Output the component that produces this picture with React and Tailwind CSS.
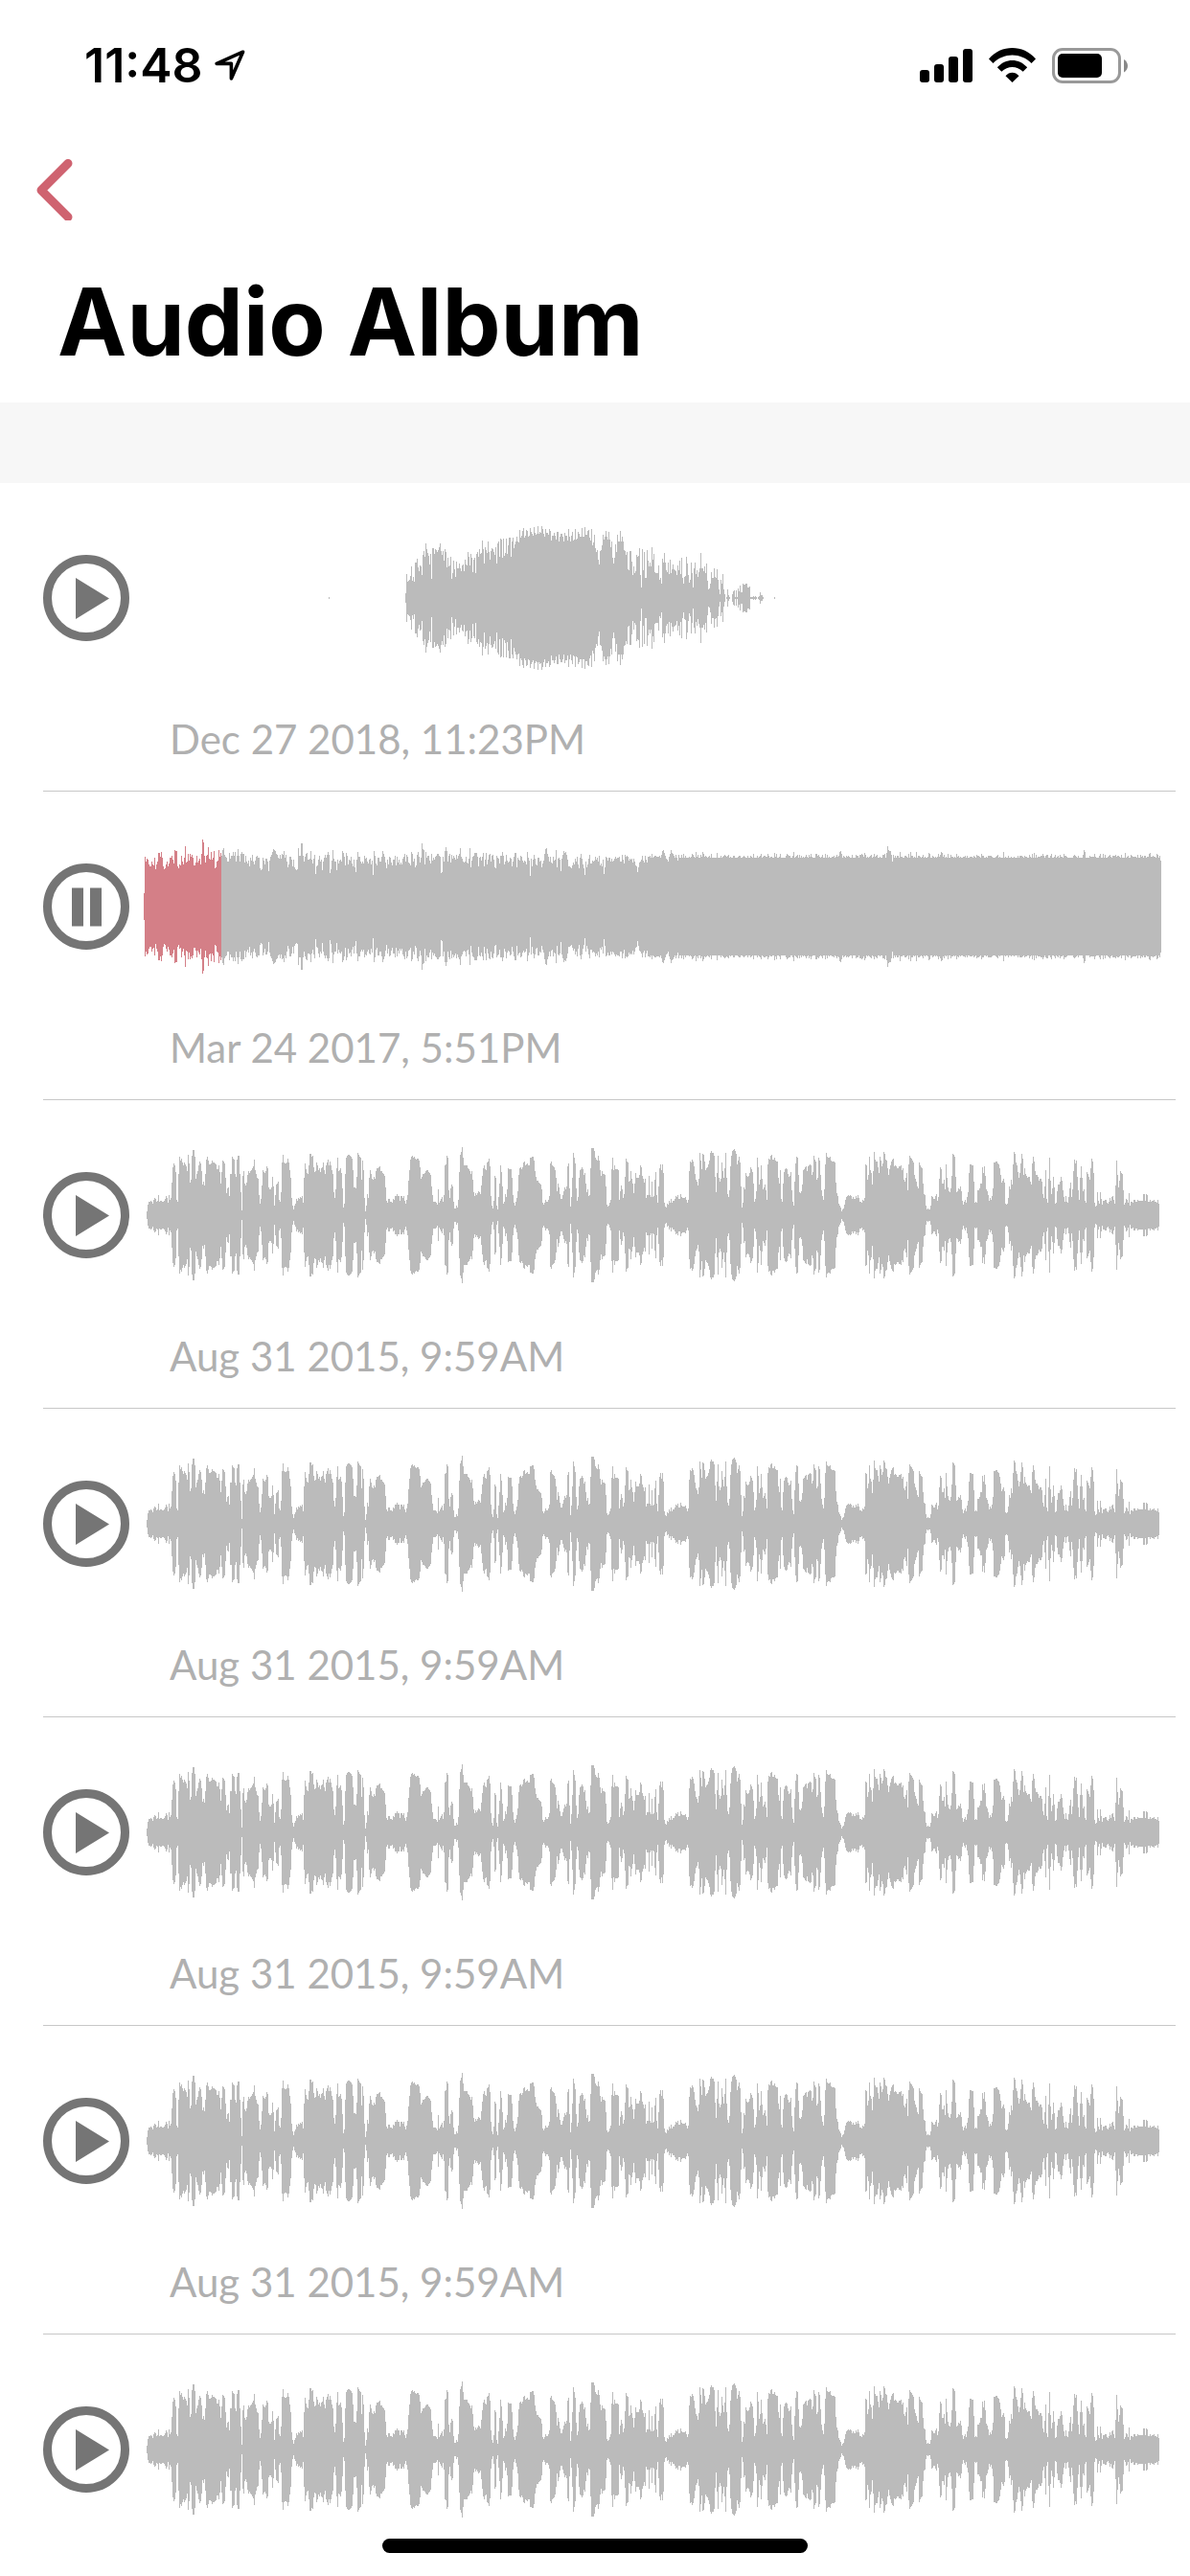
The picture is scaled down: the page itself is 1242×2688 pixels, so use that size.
import React, { useState } from 'react';

const WAVE_WIDTH = 3186;
const WAVE_HEIGHT = 510;
const MIDLINE = WAVE_HEIGHT / 2;
const STEP = 3;

// Each chunk is a list of "x:crest" steps; `at` shifts x, `zero` is the crest value of silence.
const VOICE_MEMO = [
  { at: 0, zero: 312, steps: '579:309 582:312' },
  {
    at: 690,
    zero: 312,
    steps:
      '129:297 132:237 135:261 138:258 141:255 144:243 147:213 150:258 153:246 156:261 159:201 165:189 168:216 171:228 174:210 177:213 180:240 183:177 186:165 189:183 192:141 195:159 198:171 201:180 204:207 207:174 210:252 213:156 219:174 222:159 225:162 228:168 231:162 234:153 237:141 240:165 243:177 246:165 249:195 252:159 255:168 258:216 261:186 264:213 267:210 270:183 273:252 276:234 279:195 282:222 285:246 288:198 291:219 297:204 300:219 303:228 306:210 309:207 312:228 315:192 318:207 321:210 324:168 327:183 330:210 333:174 336:186 339:231 342:192 345:186 348:234 351:174 354:168 357:183 360:159 363:174 366:171 369:132 372:159 375:204 378:153 381:162 384:171 387:135 390:168 393:192 396:165 399:156 402:159 405:168 408:177 411:153 414:204 417:141 420:135 423:183 426:126 429:129 432:186 435:126 438:180 441:171 444:126 447:174 450:147 453:123 459:183 462:135 465:123 468:156 471:144 474:135 477:120 480:135 483:138 486:99 489:123 492:117 495:102 498:93 501:123 504:117 507:99 510:102 513:120 516:117 519:93 522:105 525:111 528:117 531:90 534:108 537:114 540:111 543:87 546:111 549:105 552:108 555:87 558:96 561:111 564:120 567:96 570:108 576:114 579:96 582:102 585:132 588:117 594:108 597:117 600:129 603:105 609:135 612:120 615:111 621:120 624:135 627:108 630:117 636:132 639:96 642:120 645:135 648:117 651:105 654:132 657:129 660:96 663:129 666:126 669:105 672:111 675:120 681:93 684:120 690:90 693:114 699:102 702:99 705:123 708:132 711:96 714:147 717:138 720:114 723:156 726:168 729:162 732:192 735:207 738:165 741:162 744:147 747:114 750:129 753:120 756:102 759:120 762:129 765:105 768:129 771:153 774:135 777:186 780:204 783:186 786:144 789:168 792:114 795:135 801:102 804:135 807:120 810:135 813:162 816:165 819:177 822:168 825:222 828:225 831:165 837:198 840:240 843:213 846:234 849:228 852:177 855:183 858:180 861:156 864:240 867:279 870:159 873:225 876:168 879:249 885:162 888:195 891:213 894:201 897:213 900:153 903:192 906:174 909:231 912:234 921:210 924:255 927:249 930:267 933:189 936:201 939:171 942:201 945:225 948:231 951:201 954:237 957:192 960:234 963:222 966:207 969:222 972:225 975:228 978:240 981:210 984:225 987:195 990:237 993:186 996:249 999:267 1002:246 1005:243 1008:183 1011:204 1014:240 1017:264 1020:255 1023:201 1026:234 1029:279 1032:219 1035:201 1038:237 1041:225 1044:246 1047:231 1050:219 1053:171 1056:219 1062:228 1065:213 1068:234 1071:204 1074:258 1077:285 1080:282 1083:267 1086:231 1089:249 1095:219 1098:246 1101:249 1104:222 1107:255 1110:285 1113:300 1116:255 1119:267 1122:237 1125:285 1128:300 1131:312 1134:309 1137:285 1140:303 1143:309 1146:312 1152:300 1155:291 1158:288 1161:309 1164:288 1167:309 1170:282 1173:291 1176:273 1179:294 1185:267 1188:270 1194:267 1200:279 1206:276 1209:309 1218:306 1221:309 1224:306 1227:309 1230:312 1233:309 1236:306 1239:294 1242:303 1248:309 1251:312 1284:309 1287:312',
  },
];

const SPEECH = [
  {
    at: -30,
    zero: 264,
    steps:
      '39:252 42:231 45:222 51:219 54:222 57:228 60:216 63:210 66:213 69:222 72:219 75:201 78:222 81:219 87:222 93:219 96:213 99:204 102:210 105:225 108:201 111:216 114:210 117:162 120:114 123:102 126:108 129:129 132:216 135:222 138:135 141:81 144:93 147:87 150:99 153:108 156:99 159:105 162:111 165:126 168:75 171:102 174:162 177:153 180:78 183:60 189:81 192:150 195:135 198:126 201:108 204:96 207:102 210:126 213:168 216:159 219:171 222:135 225:90 228:81 231:93 234:105 240:102 243:93 246:99 252:102 255:105 258:120 264:108 267:129 270:165 273:129 276:93 279:96 282:102 285:147 288:195 291:180 294:177 297:204 300:135 306:81 309:87 312:90 315:135 318:144 321:90 324:78 330:135 333:192 336:249 339:141 342:126 345:165 348:171 351:162 354:138 357:126 360:132 363:126 366:123 369:117 372:111 375:90 378:123 381:135 384:147 387:150 390:201 393:228 396:213 399:171 402:123 405:129 408:132 411:126 414:111 417:117 420:177 423:183 429:177 432:144 435:174 438:234 441:201 444:168 447:165 450:159 453:216 456:222 459:192 462:99 465:75 468:99 471:102 477:99 480:87 483:99 486:123 489:147 492:210 495:234 498:246 501:234 504:228 507:213 510:219 513:210 516:213 519:207 522:210 525:204 528:225 531:147 534:102 537:120 540:132 543:135 546:108 549:72 555:81 558:78 561:114 564:129 567:126 570:99 573:108 576:123 579:117 582:129 585:117 588:114 591:99 594:123 597:135 600:108 603:99 606:90 609:108 612:96 615:108 618:123 621:135 624:192 627:210 630:183 633:117 636:84 639:126 642:123 645:117 648:132 651:180 654:240 657:228 660:135 663:84 666:78 669:75 675:78 678:81 681:87 684:123 687:177 693:180 696:144 699:69 702:75 705:81 708:84 711:153 714:93 717:123 720:210 723:252 726:234 729:198 732:210 735:147 738:123 741:135 744:150 747:153 750:144 753:150 756:126 759:117 765:114 768:111 771:126 777:132 780:135 783:141 786:177 789:219 792:225 795:213 801:222 807:225',
  },
  {
    at: 780,
    zero: 264,
    steps:
      '0:213 3:216 6:204 12:198 15:204 21:219 24:204 30:210 33:204 36:219 39:228 42:216 45:201 48:156 51:123 54:90 57:81 60:78 63:84 66:81 69:87 72:90 75:87 81:93 84:114 87:150 90:144 93:135 99:132 102:126 105:123 111:129 114:132 117:138 120:174 123:201 126:222 135:225 138:231 141:183 144:225 147:219 150:213 153:207 156:222 159:201 162:108 165:105 168:78 171:84 174:186 177:210 180:180 183:168 186:174 189:222 192:243 198:234 201:240 204:216 207:129 210:75 213:66 216:51 219:84 222:108 234:117 237:120 240:126 243:135 246:126 249:153 252:192 255:204 258:195 261:201 264:195 267:189 270:192 273:198 276:171 279:141 282:117 285:108 288:120 291:123 294:99 297:96 300:87 303:111 306:204 309:234 312:243 315:219 318:141 321:147 324:234 327:246 330:207 333:165 336:108 339:129 342:174 345:228 348:222 351:198 354:207 357:183 360:117 363:120 372:147 375:201 378:225 381:234 384:222 387:210 390:189 393:138 396:117 399:114 402:120 405:114 408:99 411:96 414:108 417:105 420:102 423:108 429:84 435:81 441:93 444:126 447:144 450:156 456:162 459:165 462:168 465:183 468:225 471:231 474:225 477:216 480:222 486:216 489:204 492:102 495:96 498:108 501:111 504:114 507:123 510:147 513:189 516:165 519:177 522:198 525:213 531:201 534:189 537:177 540:183 543:174 546:111 549:102 552:180 555:237 558:207 561:147 564:69 567:84 570:102 573:180 576:219 579:207 582:147 585:123 588:120 591:114 594:120 597:138 600:132 603:165 606:192 609:183 612:204 615:201 618:117 621:54 630:63 633:84 636:90 639:93 642:78 645:93 648:123 651:141 654:126 657:135 663:138 666:174 669:231 672:237 675:234 678:225 681:216 684:120 687:84 690:123 693:108 696:120 705:123 708:216 711:189 714:171 717:183 720:210 723:198 726:144 729:87 732:96 735:99 738:159 741:156 744:126 747:150 750:165 753:195 756:165 759:132 762:147 771:138 774:108 777:114 780:141 783:150 786:162 789:150 792:210 795:201 801:141 804:201 807:207',
  },
  {
    at: 1590,
    zero: 264,
    steps:
      '0:159 3:207 6:204 9:153 12:129 15:201 18:225 21:174 24:117 27:105 30:123 33:105 36:132 39:225 42:237 45:240 48:228 51:231 54:219 57:225 60:213 63:225 66:219 72:213 75:204 78:207 81:201 84:213 90:198 93:207 96:210 105:207 108:216 111:225 114:216 117:126 120:96 123:99 126:90 129:96 132:111 135:135 138:153 141:159 144:171 147:150 150:69 153:93 156:120 159:72 162:75 165:96 168:123 171:117 174:114 177:105 180:93 183:69 186:63 189:69 195:78 198:144 201:192 204:132 207:78 210:147 213:159 216:150 219:99 222:126 225:147 228:117 231:69 234:147 237:198 240:207 243:186 246:111 249:78 252:63 255:60 258:57 261:63 264:72 267:105 270:93 273:81 276:99 279:174 282:240 285:225 288:177 291:183 294:132 297:141 300:144 303:141 306:132 309:114 312:120 315:129 318:165 321:222 324:213 327:189 330:84 333:114 336:168 339:153 342:108 345:150 348:183 351:177 354:168 357:186 360:216 363:105 366:87 369:90 372:78 375:75 378:90 384:84 387:93 390:96 396:147 399:165 402:123 405:213 408:222 411:165 414:129 417:120 420:117 423:120 426:135 429:144 432:141 435:129 438:186 441:222 444:234 447:159 450:102 453:81 456:84 459:138 462:192 465:195 468:189 471:168 474:123 477:120 480:114 483:111 486:126 489:111 492:108 495:105 498:108 501:138 504:129 507:78 510:90 513:96 516:153 519:147 522:84 525:93 528:138 531:186 534:204 537:216 540:183 543:105 546:69 549:81 552:84 558:81 561:93 564:96 573:99 576:162 579:195 582:204 585:228 588:234 591:240 594:252 597:246 600:243 603:231 606:216 609:207 612:204 615:201 618:204 621:201 624:204 627:213 630:207 633:213 639:204 642:210 645:201 648:210 651:222 657:225 660:216 663:219 666:210 669:105 672:108 675:153 678:138 681:81 684:123 687:132 690:168 693:126 696:66 699:90 702:96 708:114 711:132 714:81 717:93 720:111 723:102 726:66 729:72 732:90 735:93 738:117 741:138 744:120 747:108 750:96 753:90 756:87 759:111 762:108 765:111 768:117 774:111 780:108 783:123 786:117 789:153 792:159 795:147 798:132 801:186 804:105 807:78',
  },
  {
    at: 2400,
    zero: 264,
    steps:
      '0:84 3:87 6:93 9:99 12:138 15:150 18:159 21:174 24:180 27:99 30:108 33:114 36:117 39:165 42:198 45:201 48:234 51:246 54:243 57:246 63:234 66:204 69:207 72:213 78:204 81:198 84:219 87:207 90:150 93:114 96:120 99:165 105:153 108:183 111:105 114:147 117:177 120:189 123:192 126:180 129:141 132:72 135:75 138:81 141:144 144:192 147:189 150:180 153:183 156:174 159:189 162:219 165:231 168:222 171:216 174:225 177:207 180:192 183:132 186:105 192:108 198:159 201:225 204:222 207:225 210:186 216:180 219:165 225:114 228:132 231:111 234:141 237:183 240:189 243:201 246:219 249:210 252:216 255:204 258:180 261:99 267:96 273:102 276:105 279:117 282:138 285:162 288:156 291:150 294:162 297:228 300:231 303:228 306:210 309:174 312:183 315:153 318:168 321:105 324:66 327:72 330:99 333:108 336:129 339:147 342:132 345:102 348:72 351:87 354:138 357:117 360:135 363:141 366:147 369:144 375:159 378:168 381:102 384:81 387:96 390:126 393:138 399:144 402:156 405:150 411:159 414:198 417:210 420:174 423:123 426:213 429:225 432:150 435:84 438:156 441:198 444:180 447:144 450:177 453:228 456:225 459:189 462:168 468:159 471:144 474:156 477:186 480:207 483:222 486:204 489:222 492:225 495:207 498:180 501:162 504:207 507:183 510:126 513:90 516:102 519:93 522:144 525:186 528:216 531:147 534:111 537:147 540:189 543:183 546:219 549:225 552:129 555:135 558:144 561:153 564:117 567:87 570:96 573:132 576:225 579:237 582:234 585:192 588:219 591:228 594:192 597:213 600:231 603:219 609:216 615:225 618:228 621:222 624:210 627:219 630:207 633:204 636:216 639:228 642:171 645:93 648:138 651:177 654:156 657:126 660:132 663:135 666:186 669:231 672:225 675:213 678:216 681:225 684:195 687:234 690:222 696:225 699:216 705:222 711:216 714:219 729:198 735:219 738:198 741:201 744:222 750:216 753:222 756:219 762:216 765:222 771:225 774:216 777:228 780:264',
  },
];

const MUSIC_OPENING = [
  {
    at: 0,
    zero: 240,
    steps:
      '0:198 3:84 6:99 9:90 12:93 15:108 18:114 24:99 27:108 30:111 33:87 36:123 39:108 42:99 45:72 51:84 54:69 57:87 60:114 63:123 66:120 69:108 72:99 75:114 78:105 81:87 87:81 90:93 93:105 96:63 99:66 105:114 108:120 111:108 114:111 117:81 120:99 123:108 126:87 129:51 132:102 135:99 138:75 141:96 144:75 147:84 150:78 153:87 156:111 162:102 165:81 168:102 171:96 174:90 177:108 180:75 183:30 186:39 189:81 192:102 195:81 198:78 201:54 204:90 207:93 210:69 213:93 216:87 219:66 222:120 225:117 228:99 231:96 234:63 237:84 240:72 243:81 246:63 249:57 252:78 255:84 258:87 261:99 267:72 270:90 273:81 279:69 282:81 285:69 288:99 291:81 294:60 297:81 300:99 303:75 306:69 309:75 315:102 318:81 321:99 324:105 327:96 330:114 333:87 336:96 339:78 342:99 345:108 348:96 351:84 354:81 357:87 363:120 366:126 369:123 372:87 375:96 378:108 381:90 387:99 390:129 393:96 396:84 399:78 402:69 405:60 408:63 411:66 414:75 417:78 420:87 423:90 426:78 429:90 432:75 435:78 438:66 441:87 444:78 447:99 450:117 453:108 456:84 462:93 465:114 468:93 471:117 474:123 477:126 480:123 483:57 486:81 492:42 498:81 501:99 504:84 507:75 510:72 513:93 519:90 522:66 525:93 528:105 531:90 534:78 537:138 540:114 543:111 546:93 549:81 552:99 555:93 558:126 561:99 564:87 567:78 570:87 573:78 576:69 579:78 582:135 585:123 588:96 591:63 594:90 597:99 603:126 606:93 609:105 612:96 615:93 618:99 621:66 624:72 627:84 630:111 633:72 636:81 639:108 642:93 645:96 648:84 651:105 654:114 657:93 660:117 663:132 666:93 669:69 672:84 678:99 681:105 684:99 687:105 690:81 693:90 696:87 699:99 702:105 705:93 708:90 711:108 714:96 717:141 720:66 723:81 726:105 729:111 732:87 738:99 744:84 747:66 750:75 753:84 756:102 759:120 762:93 765:108 768:84 771:87 774:102 777:111 780:93 786:81 789:111 792:84 795:102 798:93 801:108 804:102 807:108 810:90 813:84 816:75 819:99 822:78 825:84 828:102 831:105 834:111 837:69 840:75 843:99 846:90 849:117 852:111 855:78 858:69 861:84 864:102 867:87 870:42 873:60 876:63 879:108 882:69 885:87 888:81 894:96 897:105 900:75 903:96 906:87 909:93 912:84 915:81 918:75 924:81 927:84 930:135 933:132 936:84 939:99 942:66 945:54 948:66 951:99 954:81 957:75 960:102 963:78 966:90 969:81 972:87 975:93 978:78 981:90 984:81 987:75 990:57 993:84 996:90 999:99 1002:102 1005:99 1008:84 1011:102 1014:105 1017:90 1020:57 1023:117 1026:96 1029:84 1032:81 1035:72 1044:84 1047:114 1050:87 1053:84 1056:96 1059:84 1062:72 1065:114 1068:93 1071:72 1074:108 1077:93 1080:78 1083:75 1086:99 1089:81 1092:78 1095:93 1098:117 1101:120 1104:81 1107:87 1110:90 1113:105 1116:81 1122:69 1125:81 1128:108 1131:99 1134:78 1137:96 1140:102 1143:99 1146:87 1149:90 1152:114 1155:99 1158:84 1161:72 1167:117 1170:87 1173:93 1176:96 1179:81 1182:84 1185:96 1188:102 1191:96 1194:99 1197:108 1200:69 1203:87 1206:96 1209:144 1212:90 1215:114 1218:93 1221:78 1224:90 1227:108 1230:111 1233:87 1239:99 1242:96 1245:117 1248:105 1251:96 1254:75 1257:60 1260:57 1263:75 1266:84 1269:99 1272:84 1275:102 1278:105 1281:84 1284:96 1287:93 1290:63 1293:117 1296:90 1299:87 1302:93 1305:129 1308:90 1311:78 1314:66 1317:72 1320:69 1323:78 1326:93 1329:114 1335:117 1338:120 1341:111 1344:102 1347:108 1350:90 1353:99 1356:84 1359:108 1362:120 1365:87 1368:75 1371:90 1374:108 1377:120 1380:141 1383:99 1386:117 1389:108 1392:90 1395:78 1398:105 1404:96 1407:99 1410:96 1413:84 1416:93 1419:87 1422:99 1425:81 1428:111 1431:105 1434:114 1437:93 1440:138 1443:117 1446:84 1449:87 1452:96 1455:87 1461:99 1464:90 1467:99 1470:96 1473:90 1476:84 1479:90 1482:87 1488:84 1491:99 1497:78 1500:93 1503:105 1506:78 1509:84 1512:81 1515:84 1518:96 1521:90 1524:93 1527:90',
  },
];

const OPENING_COLUMNS = 510;

// Peaks and dips of the steady part, as "column:half height"; the rest hovers around a base level.
const STEADY_ACCENTS = new Map(
  '513:129 514:125 515:108 516:123 517:138 541:174 542:177 543:168 544:160 545:150 546:147 547:141 549:165 550:177 551:168 557:144 576:171 583:171 598:168 636:165 658:168 678:171 726:171 727:174 728:165 752:168 775:168 776:189 777:177 778:174 779:174 780:162 781:141 789:171 800:170 806:171 819:168 832:171 833:168 897:171 929:168 981:177 982:171 998:166 1024:168 1050:168 1060:159 1061:144'
    .split(' ')
    .map((pair) => pair.split(':').map(Number)),
);

function noise(n) {
  const value = Math.sin(n * 127.1 + 311.7) * 43758.5453;
  return value - Math.floor(value);
}

function crestColumns(chunks) {
  return chunks.flatMap(({ at, zero, steps }) =>
    steps.split(' ').map((pair) => {
      const [x, crest] = pair.split(':').map(Number);
      return [x + at, zero - crest];
    }),
  );
}

function musicColumns() {
  const columns = crestColumns(MUSIC_OPENING);
  for (let i = OPENING_COLUMNS; i < WAVE_WIDTH / STEP; i += 1) {
    const wobble = noise(i) ** 2;
    const base = i < 526 ? 138 + Math.round(wobble * 7) * 3 : 153 + Math.round(wobble * 4) * 3;
    columns.push([i * STEP, STEADY_ACCENTS.get(i) ?? base]);
  }
  columns.push([WAVE_WIDTH, 0]);
  return columns;
}

function outline(columns) {
  return columns
    .slice(0, -1)
    .map(([x, half], i) =>
      half > 0 ? `M${x} ${MIDLINE - half}H${columns[i + 1][0]}V${MIDLINE + half}H${x}Z` : '',
    )
    .join('');
}

const WAVES = {
  memo: outline(crestColumns(VOICE_MEMO)),
  music: outline(musicColumns()),
  speech: outline(crestColumns(SPEECH)),
};

const RECORDINGS = [
  { id: 1, wave: 'memo', date: 'Dec 27 2018, 11:23PM', played: 0 },
  { id: 2, wave: 'music', date: 'Mar 24 2017, 5:51PM', played: 243 },
  { id: 3, wave: 'speech', date: 'Aug 31 2015, 9:59AM', played: 0 },
  { id: 4, wave: 'speech', date: 'Aug 31 2015, 9:59AM', played: 0 },
  { id: 5, wave: 'speech', date: 'Aug 31 2015, 9:59AM', played: 0 },
  { id: 6, wave: 'speech', date: 'Aug 31 2015, 9:59AM', played: 0 },
  { id: 7, wave: 'speech', date: 'Aug 31 2015, 9:59AM', played: 0 },
];

function Waveform({ id, wave, played }) {
  return (
    <svg
      viewBox={`0 0 ${WAVE_WIDTH} ${WAVE_HEIGHT}`}
      preserveAspectRatio="none"
      shapeRendering="crispEdges"
      className="h-[170px] min-w-0 flex-1"
      aria-hidden="true"
    >
      <path d={WAVES[wave]} fill="#bbbbbb" />
      {played > 0 && (
        <>
          <clipPath id={`played-${id}`}>
            <rect x="0" y="0" width={played} height={WAVE_HEIGHT} />
          </clipPath>
          <path d={WAVES[wave]} fill="#d47f87" clipPath={`url(#played-${id})`} />
        </>
      )}
    </svg>
  );
}

function PlayIcon({ playing }) {
  return (
    <svg viewBox="0 0 90 90" className="size-[90px]" aria-hidden="true">
      <circle cx="45" cy="45" r="40.5" fill="none" stroke="#757575" strokeWidth="9" />
      {playing ? (
        <path d="M30 25.5h12v40H30zM49 25.5h12v40H49z" fill="#757575" />
      ) : (
        <path d="M34 24l35 21.5-35 21.5z" fill="#757575" />
      )}
    </svg>
  );
}

function Recording({ recording, playing, onToggle }) {
  return (
    <li className="ml-[45px] mr-[15px] border-b border-[#c8c8c8] pb-6 pt-[35px]">
      <div className="flex items-center gap-[15px] pr-[15px]">
        <button
          type="button"
          className="shrink-0 rounded-full"
          aria-label={`${playing ? 'Pause' : 'Play'} ${recording.date}`}
          onClick={onToggle}
        >
          <PlayIcon playing={playing} />
        </button>
        <Waveform {...recording} />
      </div>
      <p className="ml-[132px] mt-8 font-['Lato',sans-serif] text-[42px] leading-[60px] text-[#b0b0b0]">
        {recording.date}
      </p>
    </li>
  );
}

function StatusBar() {
  return (
    <div className="flex h-[136px] items-center justify-between pl-[88px] pr-[65px]">
      <div className="flex items-center gap-3">
        <span className="text-[50px] font-semibold leading-[60px]">11:48</span>
        <svg viewBox="0 0 32 32" className="size-8" fill="none" stroke="#000" strokeWidth="3.6" strokeLinejoin="round" aria-hidden="true">
          <path d="M29.5 2.200L2.200 14.400h15.200V30z" />
        </svg>
      </div>
      <div className="flex items-center gap-[17px]">
        <svg viewBox="0 0 55 36" className="h-9 w-[55px]" aria-hidden="true">
          <rect x="0" y="23" width="10" height="13" rx="3" />
          <rect x="15" y="17" width="10" height="19" rx="3" />
          <rect x="30" y="9" width="10" height="27" rx="3" />
          <rect x="45" y="1" width="10" height="35" rx="3" />
        </svg>
        <svg viewBox="0 0 49 36" className="h-9 w-[49px]" aria-hidden="true">
          <path d="M0 11.5C13-3.800 36-3.800 49 11.5L44.5 16C33.5 4.500 15.5 4.500 4.500 16z" />
          <path d="M8.800 20.300c9-9.800 22.400-9.800 31.400 0L35.700 24.800c-6.500-6.400-15.900-6.400-22.400 0z" />
          <path d="M17.5 29.200c4-4.500 10-4.500 14 0L24.5 36z" />
        </svg>
        <svg viewBox="0 0 79 37" className="h-[37px] w-[79px]" aria-hidden="true">
          <rect x="1.5" y="1.5" width="69" height="34" rx="9.5" fill="none" stroke="#999" strokeWidth="3" />
          <rect x="6" y="6" width="46" height="25" rx="5" />
          <path d="M75 12c5.300 3 5.300 10.500 0 13.500z" fill="#888" />
        </svg>
      </div>
    </div>
  );
}

export default function App() {
  const [playingId, setPlayingId] = useState(2);
  return (
    <div className="relative flex h-screen flex-col overflow-hidden bg-white font-['Inter',sans-serif] text-black">
      <header className="shrink-0">
        <StatusBar />
        <nav className="flex h-[124px] items-center pl-[37px]">
          <button type="button" aria-label="Back">
            <svg viewBox="0 0 40 64" className="h-16 w-10" fill="none" stroke="#cf6370" strokeWidth="9" strokeLinecap="round" strokeLinejoin="round" aria-hidden="true">
              <path d="M34 4.500L6 32.500l28 28" />
            </svg>
          </button>
        </nav>
        <h1 className="h-[160px] pl-[60px] text-[97px] font-bold leading-[152px]">Audio Album</h1>
      </header>
      <div className="h-[84px] shrink-0 bg-[#f7f7f7]" />
      <ul className="min-h-0 flex-1">
        {RECORDINGS.map((recording) => (
          <Recording
            key={recording.id}
            recording={recording}
            playing={recording.id === playingId}
            onToggle={() => setPlayingId(recording.id === playingId ? null : recording.id)}
          />
        ))}
      </ul>
      <div className="absolute bottom-6 left-1/2 h-[15px] w-[444px] -translate-x-1/2 rounded-full bg-black" />
    </div>
  );
}
